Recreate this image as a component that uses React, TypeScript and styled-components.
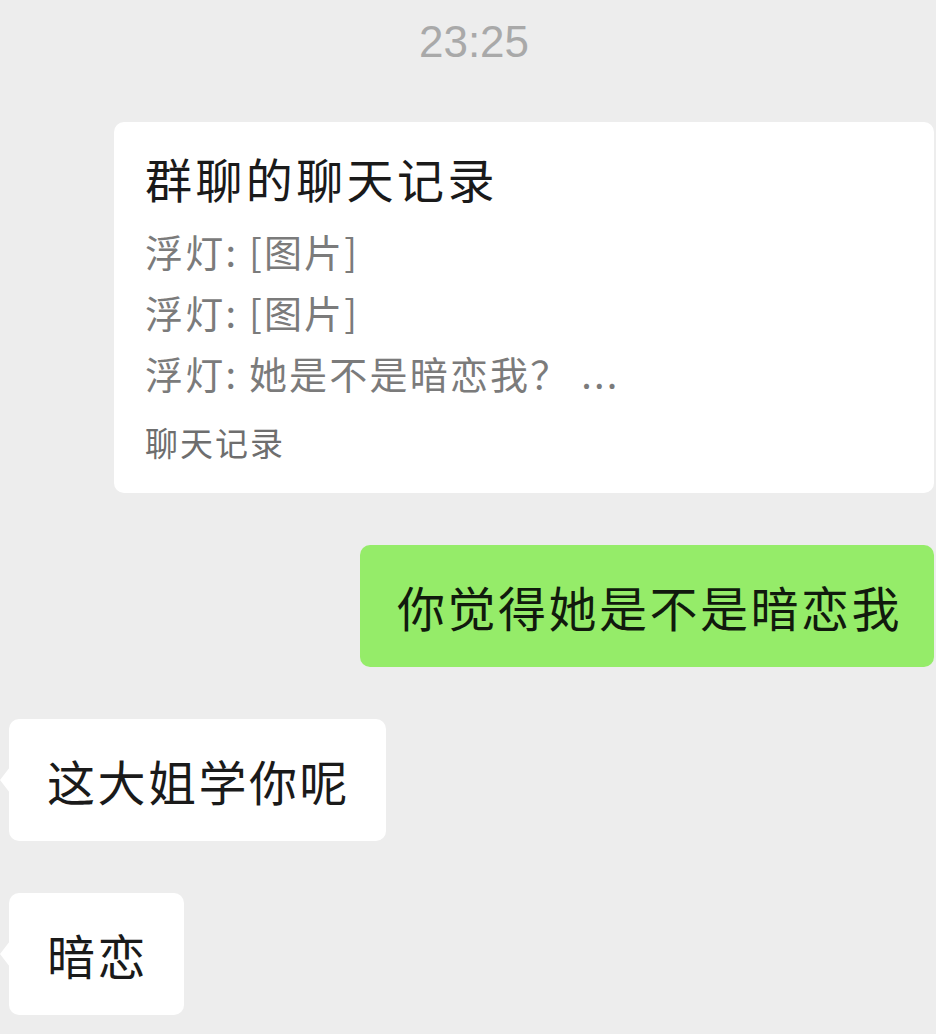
import React from 'react'
import styled, { createGlobalStyle } from 'styled-components'

const GlobalStyle = createGlobalStyle`
html, body {
  margin: 0;
  padding: 0;
  background: #ededed;
}
body {
  font-family: "Noto Sans CJK SC", "Noto Sans", sans-serif;
}
`

const Page = styled.div`
width: 936px;
min-height: 1034px;
display: flex;
flex-direction: column;
overflow: hidden;
background: #ededed;`

const Time = styled.div`
margin-top: 17px;
height: 50px;
line-height: 50px;
text-align: center;
font-family: "Liberation Sans", Arial, sans-serif;
font-size: 44px;
color: #a9a9a9;
padding-left: 12px;`

const Card = styled.div`
margin: 55px 2px 0 114px;
padding: 26px 31px 26px;
background: #fff;
border-radius: 10px;
display: flex;
flex-direction: column;`

const CardTitle = styled.div`
margin-bottom: 12px;
font-size: 47px;
line-height: 60px;
color: #1a1a1a;
letter-spacing: 3.4px;`

const CardLine = styled.div`
font-size: 38px;
line-height: 61px;
color: #7b7b7b;
letter-spacing: 2.2px;`

const CardLabel = styled.div`
margin-top: 14px;
font-size: 33px;
line-height: 50px;
color: #6e6e6e;
letter-spacing: 2px;`

const Row = styled.div<{ $mine?: boolean }>`
display: flex;
justify-content: ${p => (p.$mine ? 'flex-end' : 'flex-start')};
margin-top: 52px;
padding: ${p => (p.$mine ? '0 2px 0 0' : '0 0 0 9px')};`

const Bubble = styled.div<{ $mine?: boolean }>`
position: relative;
height: 122px;
box-sizing: border-box;
padding: ${p => (p.$mine ? '0 32px 0 37px' : '0 36px 0 38px')};
display: flex;
align-items: center;
border-radius: 10px;
font-size: 48px;
letter-spacing: 2.5px;
color: ${p => (p.$mine ? '#111a0d' : '#1a1a1a')};
background: ${p => (p.$mine ? '#95ec69' : '#ffffff')};
${p =>
    !p.$mine &&
    `
&::before {
  content: '';
  position: absolute;
  left: -9px;
  top: 48px;
  border-top: 13px solid transparent;
  border-bottom: 13px solid transparent;
  border-right: 10px solid #ffffff;
}`}`

const lines = ['浮灯: [图片]', '浮灯: [图片]', '浮灯: 她是不是暗恋我？ ...']

const App: React.FC = () => {
  return (
    <Page>
      <GlobalStyle />
      <Time>23:25</Time>
      <Card>
        <CardTitle>群聊的聊天记录</CardTitle>
        {lines.map((line, index) => (
          <CardLine key={index}>{line}</CardLine>
        ))}
        <CardLabel>聊天记录</CardLabel>
      </Card>
      <Row $mine>
        <Bubble $mine>你觉得她是不是暗恋我</Bubble>
      </Row>
      <Row>
        <Bubble>这大姐学你呢</Bubble>
      </Row>
      <Row>
        <Bubble>暗恋</Bubble>
      </Row>
    </Page>
  )
}

export default App
